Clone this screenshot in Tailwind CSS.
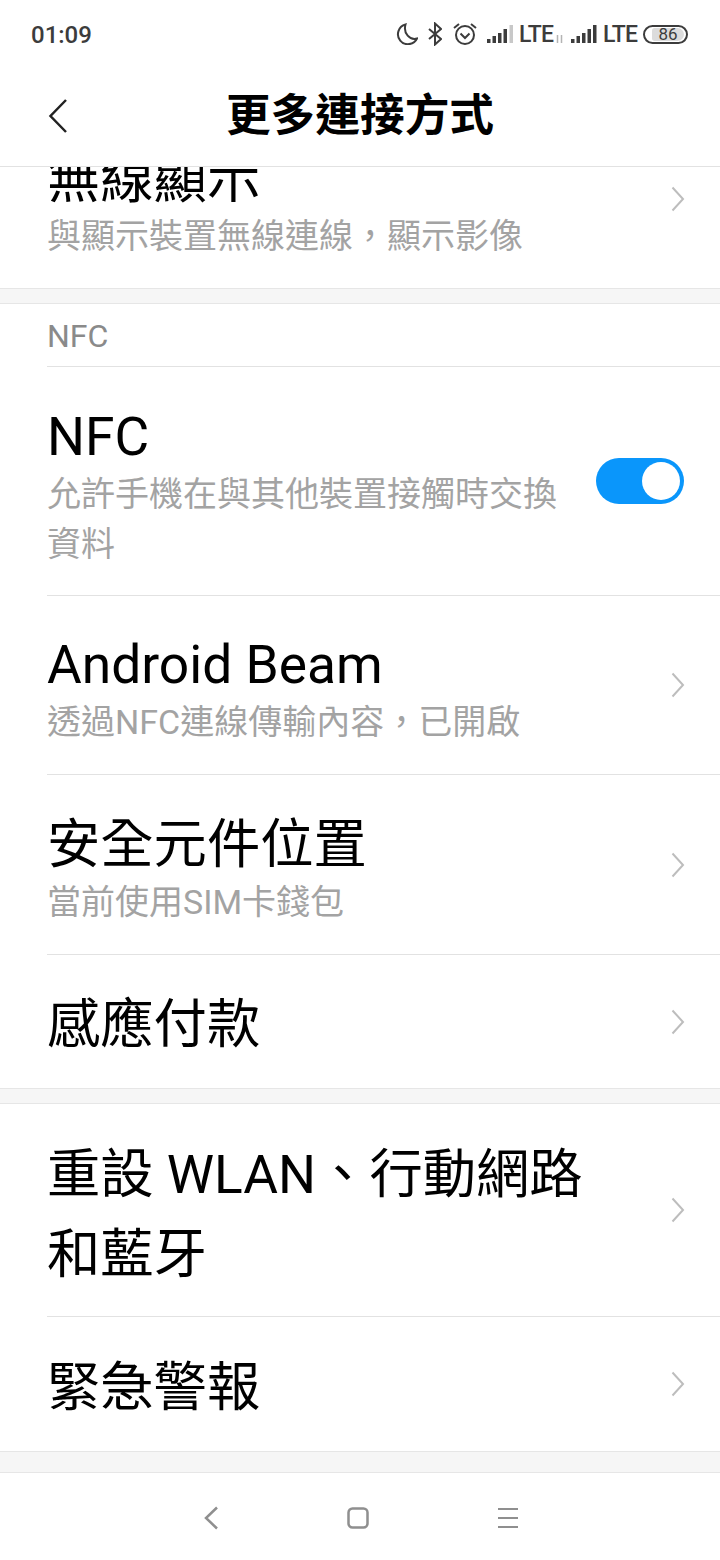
<!DOCTYPE html>
<html lang="zh-TW">
<head>
    <meta charset="utf-8">
    <title>更多連接方式</title>
    <script src="https://cdn.jsdelivr.net/npm/@tailwindcss/browser@4"></script>
</head>
<body>
<div class="w-[720px] h-[1560px] flex flex-col bg-white overflow-hidden font-['Roboto','Noto_Sans_CJK_TC',sans-serif]">

    <!-- status bar -->
    <div class="h-[68px] shrink-0 flex items-center justify-between pl-[31px] pr-[32px] text-[#3c3c3c]">
        <span class="text-[24px] font-medium leading-none mt-[2px]">01:09</span>
        <div class="flex items-center">
            <svg class="w-[22px] h-[22px]" viewBox="0 0 22 22" fill="none" stroke="#3c3c3c" stroke-width="2"><path d="M9.500 1.500a10 10 0 1 0 11.500 14C14 17.500 7 10.500 9.500 1.500z"/></svg>
            <svg class="w-[14px] h-[24px] ml-[10px]" viewBox="0 0 14 24" fill="none" stroke="#3c3c3c" stroke-width="2"><path d="M1 7l12 10-6 5.500V1.500L13 7 1 17"/></svg>
            <svg class="w-[24px] h-[24px] ml-[11px]" viewBox="0 0 24 24" fill="none" stroke="#3c3c3c" stroke-width="2"><circle cx="12" cy="13" r="9"/><path d="M7.500 11.500l4.500 4.500 4.500-4.500M1 6l5-4M23 6l-5-4"/></svg>
            <svg class="w-[27px] h-[20px] ml-[10px]" viewBox="0 0 27 20" fill="#3c3c3c"><rect x="0" y="15" width="3.500" height="4"/><rect x="5.500" y="12" width="3.500" height="7"/><rect x="11" y="9" width="3.500" height="10"/><rect x="16.500" y="5" width="3.500" height="14"/><rect x="22.500" y="1" width="3.500" height="18" fill="#c8c8c8"/></svg>
            <span class="w-[34px] text-[23px] font-medium leading-none ml-[5px] tracking-[-0.8px]">LTE</span>
            <svg class="w-[9px] h-[10px] ml-[2px] mt-[9px]" viewBox="0 0 9 10" fill="none" stroke="#b4b4b4" stroke-width="1.500"><path d="M2.500 1v8M6.500 1v8"/></svg>
            <svg class="w-[27px] h-[20px] ml-[7px]" viewBox="0 0 27 20" fill="#3c3c3c"><rect x="0" y="15" width="3.500" height="4"/><rect x="5.500" y="12" width="3.500" height="7"/><rect x="11" y="9" width="3.500" height="10"/><rect x="16.500" y="5" width="3.500" height="14"/><rect x="22" y="1" width="3.500" height="18"/></svg>
            <span class="w-[34px] text-[23px] font-medium leading-none ml-[5px] tracking-[-0.8px]">LTE</span>
            <div class="ml-[6px] w-[45px] h-[19px] rounded-full border-2 border-[#3c3c3c] pl-[7px] pr-[2px] py-[1px] flex">
                <div class="flex-1 h-full rounded-r-[7px] rounded-l-[3px] bg-[#dcdcdc] flex items-center justify-center text-[17px] leading-none">86</div>
            </div>
        </div>
    </div>

    <!-- title bar -->
    <div class="relative h-[99px] shrink-0 flex items-center justify-center border-b border-[#e2e2e2] pb-[1px]">
        <svg class="absolute left-[48px] top-[30px] w-[20px] h-[36px]" viewBox="0 0 20 36" fill="none" stroke="#222" stroke-width="2.500"><path d="M18 2L2.500 18 18 34"/></svg>
        <h1 class="text-[44.700px] font-bold text-black leading-none">更多連接方式</h1>
    </div>

    <!-- scrolled list -->
    <div class="flex-1 flex flex-col min-h-0">
        <div class="h-[122px] shrink-0 relative overflow-hidden border-b border-[#e6e6e6]">
            <div class="absolute left-[47px] top-[-17px] text-[53.300px] leading-[60px] text-black">無線顯示</div>
            <div class="absolute left-[47px] top-[48px] text-[34px] leading-[42px] text-[#a3a3a3]">與顯示裝置無線連線，顯示影像</div>
            <svg class="absolute left-[671px] top-[19px] w-[14px] h-[26px]" viewBox="0 0 14 26" fill="none" stroke="#bdbdbd" stroke-width="2"><path d="M1.500 1.500L12 13 1.500 24.500"/></svg>
        </div>
        <div class="h-[14px] shrink-0 bg-[#f6f6f6]"></div>

        <div class="border-t border-[#e6e6e6] h-[63px] shrink-0 pl-[47px] pt-[2px] flex items-center">
            <span class="text-[32px] leading-none text-[#8a8a8a]">NFC</span>
        </div>

        <div class="ml-[47px] border-t border-[#e2e2e2] h-[229px] shrink-0 flex items-start justify-between pr-[36px]">
            <div class="pt-[40px] w-[520px]">
                <div class="text-[53.300px] leading-[60px] text-black">NFC</div>
                <div class="text-[34px] leading-[50px] text-[#a3a3a3] mt-[2px]">允許手機在與其他裝置接觸時交換資料</div>
            </div>
            <div class="mt-[91px] w-[88px] h-[46px] rounded-full bg-[#0a96fb] flex items-center justify-end pr-[4px]">
                <div class="w-[38px] h-[38px] rounded-full bg-white"></div>
            </div>
        </div>

        <div class="ml-[47px] border-t border-[#e2e2e2] h-[179px] shrink-0 flex items-center justify-between pr-[35px]">
            <div class="pt-[8px]">
                <div class="text-[53.300px] leading-[60px] text-black">Android Beam</div>
                <div class="text-[34px] leading-[42px] text-[#a3a3a3] mt-[6px]">透過NFC連線傳輸內容，已開啟</div>
            </div>
            <svg class="w-[14px] h-[26px]" viewBox="0 0 14 26" fill="none" stroke="#bdbdbd" stroke-width="2"><path d="M1.500 1.500L12 13 1.500 24.500"/></svg>
        </div>

        <div class="ml-[47px] border-t border-[#e2e2e2] h-[180px] shrink-0 flex items-center justify-between pr-[35px]">
            <div class="pt-[8px]">
                <div class="text-[53.300px] leading-[60px] text-black">安全元件位置</div>
                <div class="text-[34px] leading-[42px] text-[#a3a3a3] mt-[6px]">當前使用SIM卡錢包</div>
            </div>
            <svg class="w-[14px] h-[26px]" viewBox="0 0 14 26" fill="none" stroke="#bdbdbd" stroke-width="2"><path d="M1.500 1.500L12 13 1.500 24.500"/></svg>
        </div>

        <div class="ml-[47px] border-t border-[#e2e2e2] h-[134px] shrink-0 flex items-center justify-between pr-[35px]">
            <div class="pt-[6px] text-[53.300px] leading-[60px] text-black">感應付款</div>
            <svg class="w-[14px] h-[26px]" viewBox="0 0 14 26" fill="none" stroke="#bdbdbd" stroke-width="2"><path d="M1.500 1.500L12 13 1.500 24.500"/></svg>
        </div>

        <div class="h-[16px] shrink-0 bg-[#f6f6f6] border-y border-[#e6e6e6]"></div>

        <div class="ml-[47px] h-[212px] shrink-0 flex items-center justify-between pr-[35px]">
            <div class="pt-[9px] w-[560px] text-[53.300px] leading-[80px] text-black">重設 WLAN、行動網路和藍牙</div>
            <svg class="w-[14px] h-[26px]" viewBox="0 0 14 26" fill="none" stroke="#bdbdbd" stroke-width="2"><path d="M1.500 1.500L12 13 1.500 24.500"/></svg>
        </div>

        <div class="ml-[47px] border-t border-[#e2e2e2] h-[135px] shrink-0 flex items-center justify-between pr-[35px]">
            <div class="pt-[8px] text-[53.300px] leading-[60px] text-black">緊急警報</div>
            <svg class="w-[14px] h-[26px]" viewBox="0 0 14 26" fill="none" stroke="#bdbdbd" stroke-width="2"><path d="M1.500 1.500L12 13 1.500 24.500"/></svg>
        </div>

        <div class="flex-1 bg-[#f6f6f6] border-y border-[#e6e6e6]"></div>
    </div>

    <!-- nav bar -->
    <div class="h-[87px] shrink-0 bg-white flex items-center pl-[203px] pt-[3px]">
        <svg class="w-[16px] h-[24px] mr-[128px]" viewBox="0 0 16 24" fill="none" stroke="#8f8f8f" stroke-width="2.500"><path d="M14 1.500L3 12l11 10.500"/></svg>
        <svg class="w-[22px] h-[22px] mr-[129px]" viewBox="0 0 22 22" fill="none" stroke="#8f8f8f" stroke-width="2.500"><rect x="1.500" y="1.500" width="19" height="19" rx="4"/></svg>
        <svg class="w-[20px] h-[20px]" viewBox="0 0 20 20" fill="none" stroke="#8f8f8f" stroke-width="2"><path d="M0 1h20M0 10h20M0 19h20"/></svg>
    </div>
</div>
</body>
</html>
